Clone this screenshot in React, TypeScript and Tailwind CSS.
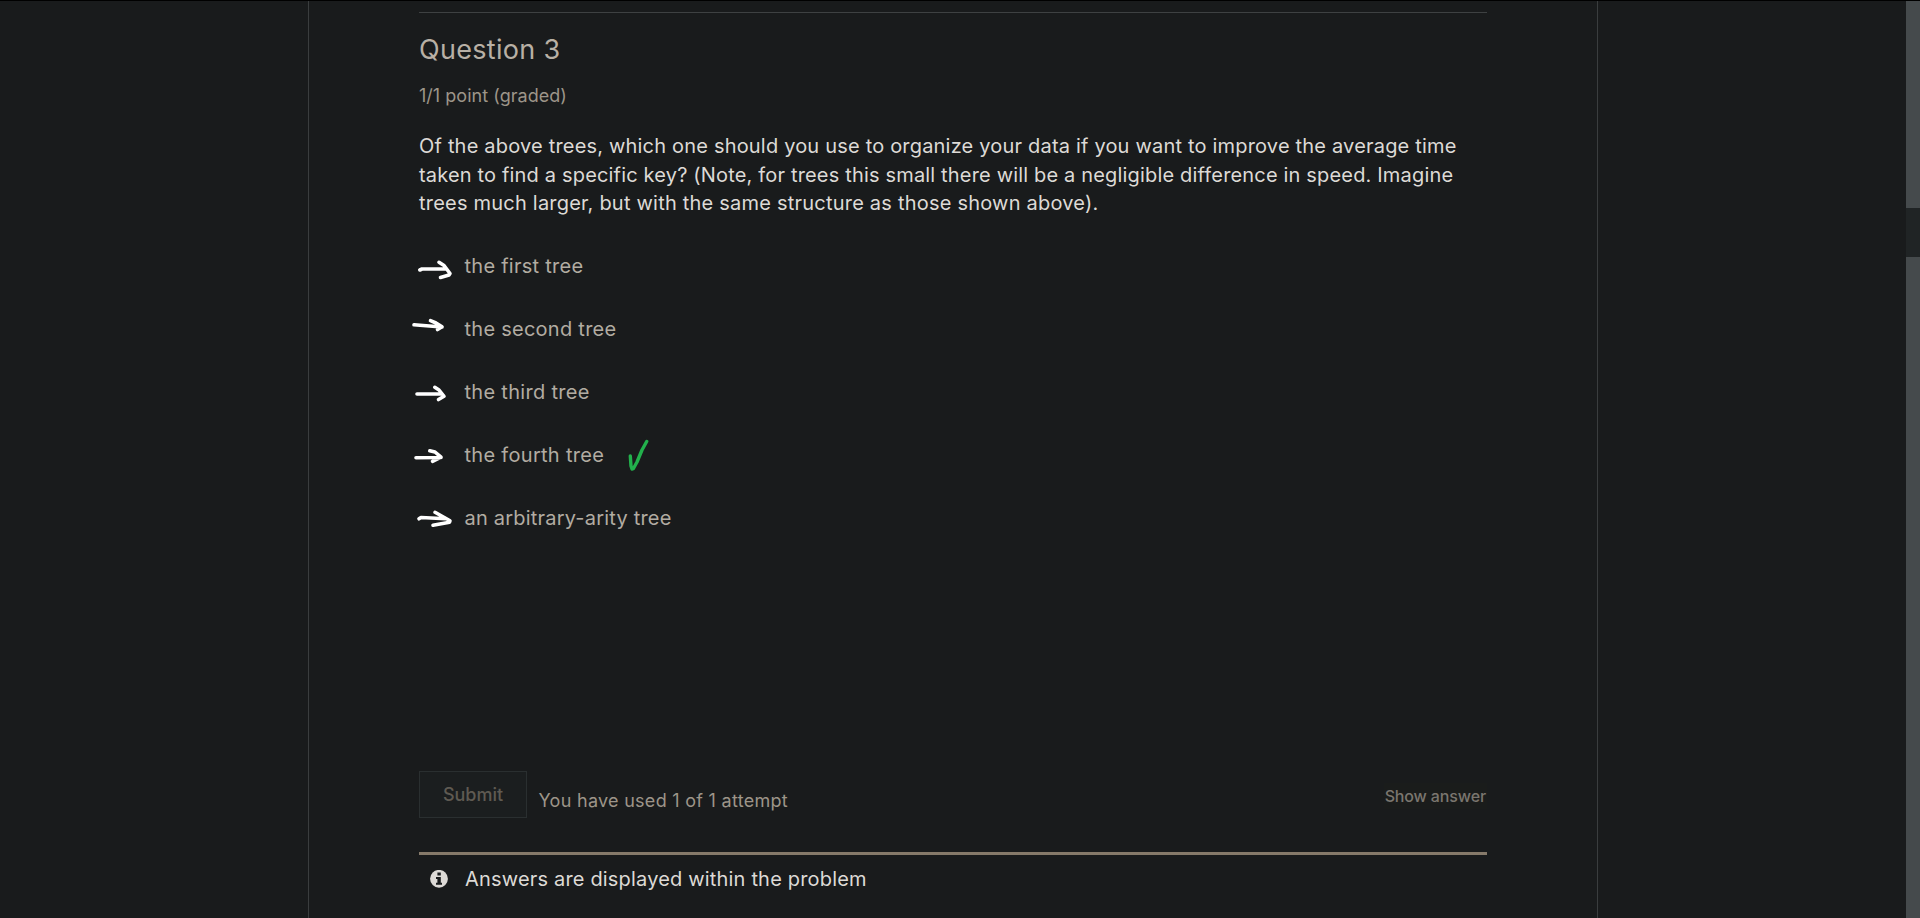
import React from "react";

type Option = { label: string; arrow: string; tracking: string; correct?: boolean };

const options: Option[] = [
  { label: "the first tree", tracking: "tracking-[0.26px]", arrow: "M9.8 35 L12 34 L35 34 M29 27.3 L34 30.5 L40 38.5 L39 40 L30.5 42.5" },
  { label: "the second tree", tracking: "tracking-[0.26px]", arrow: "M4 26.8 L10 27.2 L32 29 M20.5 22.7 L26 25 L32 28.7 L27.5 31.5" },
  { label: "the third tree", tracking: "tracking-[0.3px]", arrow: "M7 33 L31 33 M24.8 26.3 L29 29 L34 35.3 L28.5 38.5" },
  { label: "the fourth tree", tracking: "tracking-[0.3px]", arrow: "M6 33.8 L31 33.5 M19.8 26.8 L25 28 L31 33.2 L22.5 37.3", correct: true },
  { label: "an arbitrary-arity tree", tracking: "tracking-[0.2px]", arrow: "M9 31.8 L11 30.5 L36 31.7 M25 25.3 L40 33.7 L39.5 35.2 L23 38.2" },
];

function OptionRow({ label, arrow, tracking, correct }: Option) {
  return (
    <li className="flex h-[63px] items-center">
      <svg
        className="-ml-[9px] h-[63px] w-[54px] shrink-0"
        viewBox="0 0 54 63"
        fill="none"
        stroke="#fff"
        strokeWidth="3.6"
        strokeLinecap="round"
        strokeLinejoin="round"
      >
        <path d={arrow} />
      </svg>
      <span className={`ml-[0.5px] text-[20px] leading-[28px] text-[#b2aca2] ${tracking}`}>{label}</span>
      {correct && (
        <svg
          className="ml-[24px] h-[34px] w-[21px] shrink-0"
          viewBox="628 438 21 34"
          fill="none"
          stroke="#22b14c"
          strokeWidth="3.4"
          strokeLinecap="round"
          strokeLinejoin="round"
        >
          <path d="M630.3 456 L631 466 L632 469 L633.3 468.7 L637 462 L642 450 L646.7 441.5" />
        </svg>
      )}
    </li>
  );
}

export default function App() {
  return (
    <div className="flex h-[918px] w-full overflow-hidden border-t border-black bg-[#191b1c] font-['Inter',sans-serif]">
      <div className="w-[308px] shrink-0" />
      <main className="flex w-[1290px] shrink-0 flex-col border-x border-[#3a3d3e] pr-[110px] pl-[110px]">
        <div className="mt-[11px] h-px bg-[#3e4142]" />
        <h3 className="mt-[18px] text-[27px] leading-[38px] tracking-[0.3px] text-[#b8b0a5]">
          Question 3
        </h3>
        <div className="mt-[14px] text-[18px] leading-[26px] tracking-[0.03px] text-[#9d9589]">1/1 point (graded)</div>
        <p className="mt-[23px] text-[20px] leading-[28.6px] whitespace-nowrap text-[#dddad6]">
          <span className="tracking-[0.19px]">
            Of the above trees, which one should you use to organize your data if you want to improve the average time
          </span>
          <br />
          <span className="tracking-[0.172px]">
            taken to find a specific key? (Note, for trees this small there will be a negligible difference in speed. Imagine
          </span>
          <br />
          <span className="tracking-[0.215px]">
            trees much larger, but with the same structure as those shown above).
          </span>
        </p>
        <ul className="mt-[17px]">
          {options.map((o) => (
            <OptionRow key={o.label} {...o} />
          ))}
        </ul>
        <div className="mt-[221px] flex h-[47px]">
          <button className="h-[47px] w-[108px] border border-[#2a2f30] bg-[#1b1e1f] pt-[2px] text-[18px] leading-[26px] font-medium text-[#5f5a52]">
            Submit
          </button>
          <span className="mt-[17px] ml-[11.5px] text-[18px] leading-[26px] tracking-[0.28px] text-[#9d9589]">
            You have used 1 of 1 attempt
          </span>
          <button className="mt-[12px] ml-auto h-[26px] bg-[#1a1c1b] px-[1px] text-[16px] leading-[26px] font-medium tracking-[-0.13px] text-[#7a766f]">
            Show answer
          </button>
        </div>
        <div className="mt-[34px] flex h-[60px] border-t-[3px] border-[#867a6a] pl-[11px]">
          <svg className="mt-[15px] h-[18px] w-[18px]" viewBox="0 0 18 18">
            <circle cx="9" cy="8.8" r="8.9" fill="#dddad6" />
            <path d="M7.4 2.4h3.4v3H7.4z M6 7h4.8v5.7H12v2H6v-2h1.4V9H6z" fill="#191b1c" />
          </svg>
          <span className="mt-[10px] ml-[17px] text-[20px] leading-[28px] tracking-[0.18px] text-[#dddad6]">
            Answers are displayed within the problem
          </span>
        </div>
      </main>
      <div className="ml-auto flex w-[14px] flex-col bg-[#454a4c]">
        <div className="mt-[207px] h-[49px] bg-[#202425]" />
      </div>
    </div>
  );
}
